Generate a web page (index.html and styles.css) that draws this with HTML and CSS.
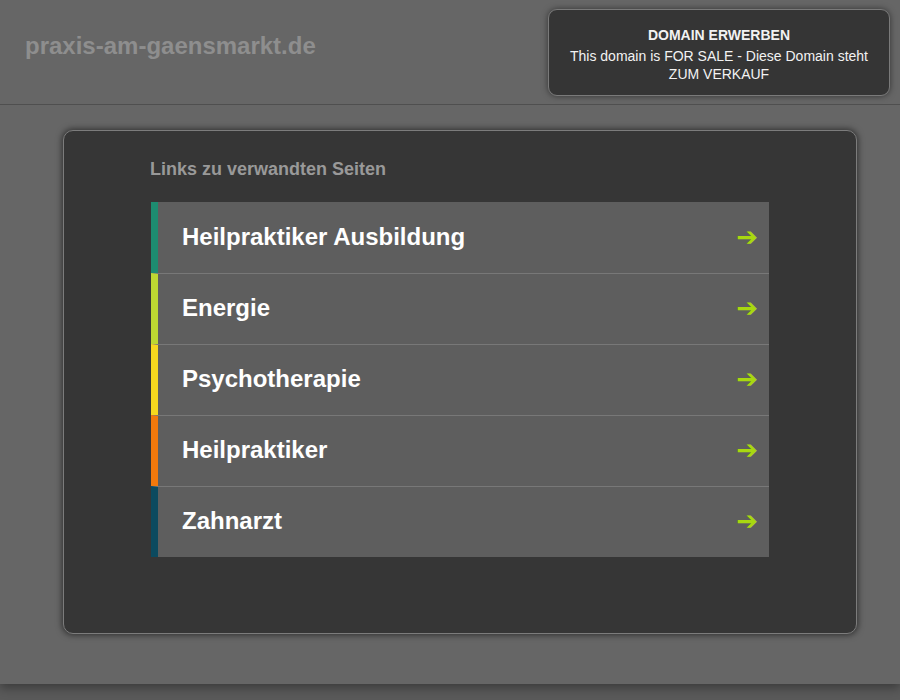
FILE: index.html
```html
<!DOCTYPE html>
<html lang="de">
<head>
  <meta charset="UTF-8">
  <meta name="viewport" content="width=device-width, initial-scale=1.0">
  <title>praxis-am-gaensmarkt.de</title>
  <link rel="stylesheet" href="styles.css">
</head>
<body>
  <div class="page">
    <header class="header">
      <h1 class="domain">praxis-am-gaensmarkt.de</h1>
      <a class="sale-box" href="#">
        <strong>DOMAIN ERWERBEN</strong>
        <span>This domain is FOR SALE - Diese Domain steht ZUM VERKAUF</span>
      </a>
    </header>

    <main class="content">
      <div class="panel">
        <h2>Links zu verwandten Seiten</h2>
        <ul class="links">
          <li class="c1"><a href="#">Heilpraktiker Ausbildung <span class="arrow">&#10132;</span></a></li>
          <li class="c2"><a href="#">Energie <span class="arrow">&#10132;</span></a></li>
          <li class="c3"><a href="#">Psychotherapie <span class="arrow">&#10132;</span></a></li>
          <li class="c4"><a href="#">Heilpraktiker <span class="arrow">&#10132;</span></a></li>
          <li class="c5"><a href="#">Zahnarzt <span class="arrow">&#10132;</span></a></li>
        </ul>
      </div>
    </main>
  </div>
</body>
</html>
```

FILE: styles.css
```css
html, body {
  margin: 0;
  padding: 0;
}

body {
  font-family: "Liberation Sans", Arial, sans-serif;
  background: #5a5a5a;
  height: 700px;
  overflow: hidden;
}

.page {
  background: #666;
  height: 684px;
  box-shadow: 0 4px 10px rgba(0,0,0,0.35);
}

.header {
  display: flex;
  justify-content: space-between;
  align-items: flex-start;
  height: 105px;
  border-bottom: 1px solid #4f4f4f;
  box-sizing: border-box;
  padding: 9px 10px 0 25px;
}

.domain {
  margin: 23px 0 0;
  font-size: 24px;
  line-height: 28px;
  font-weight: bold;
  color: #8e8e8e;
}

.sale-box {
  display: flex;
  flex-direction: column;
  align-items: center;
  width: 342px;
  height: 87px;
  box-sizing: border-box;
  padding: 16px 12px 0;
  background: #353535;
  border: 1px solid #7a7a7a;
  border-radius: 9px;
  box-shadow: 0 0 6px rgba(0,0,0,0.5);
  color: #f2f2f2;
  text-decoration: none;
  text-align: center;
  font-size: 14px;
  line-height: 18px;
}

.sale-box strong {
  margin-bottom: 3px;
}

.content {
  padding: 25px 43px 0 63px;
}

.panel {
  height: 504px;
  box-sizing: border-box;
  background: #363636;
  border: 1px solid #7c7c7c;
  border-radius: 10px;
  box-shadow: 0 0 6px 1px rgba(0,0,0,0.55);
  padding: 28px 87px 0 87px;
}

.panel h2 {
  margin: 0 0 22px -1px;
  font-size: 18px;
  line-height: 21px;
  font-weight: bold;
  color: #999;
}

.links {
  list-style: none;
  margin: 0;
  padding: 0;
  width: 618px;
}

.links li {
  border-left: 7px solid #999;
  background: #5e5e5e;
  border-top: 1px solid #787878;
}

.links li:first-child {
  border-top: none;
}

.links a {
  display: flex;
  justify-content: space-between;
  align-items: center;
  height: 70px;
  padding: 0 11px 2px 24px;
  box-sizing: border-box;
  color: #fff;
  font-size: 24px;
  font-weight: bold;
  text-decoration: none;
}

.links li:first-child a {
  height: 71px;
}

.arrow {
  color: #a8d810;
  font-family: "DejaVu Sans", sans-serif;
  font-size: 26px;
}

.c1 { border-left-color: #1d8c70 !important; }
.c2 { border-left-color: #bdd832 !important; }
.c3 { border-left-color: #f6d81e !important; }
.c4 { border-left-color: #f2790c !important; }
.c5 { border-left-color: #0c4a5f !important; }
```
